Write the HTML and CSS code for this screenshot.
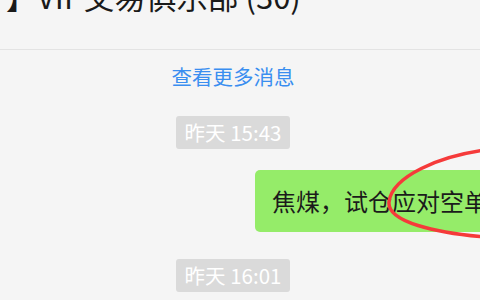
FILE: index.html
```html
<!DOCTYPE html>
<html lang="zh-CN">
<head>
<meta charset="utf-8">
<link rel="stylesheet" href="styles.css">
</head>
<body>
<div class="window">
  <header class="chat-header">
    <div class="chat-title">】VIP交易俱乐部 (30)</div>
  </header>
  <main class="messages">
    <a class="more-link">查看更多消息</a>
    <div class="time-row"><span class="time-tag">昨天 15:43</span></div>
    <div class="msg-row self">
      <div class="bubble">焦煤，试仓应对空单</div>
    </div>
    <div class="time-row second"><span class="time-tag">昨天 16:01</span></div>
  </main>
  <svg class="annotation" width="480" height="300" viewBox="0 0 480 300">
    <path d="M486 150 C440 156 392 176 389 202 C387 222 436 233 486 237" fill="none" stroke="#f53a3a" stroke-width="3.5" stroke-linecap="round"/>
  </svg>
</div>
</body>
</html>
```
FILE: styles.css
```css
html, body {
  margin: 0;
  padding: 0;
  background: #f5f5f5;
  overflow: hidden;
}

.window {
  position: relative;
  width: 480px;
  height: 300px;
  overflow: hidden;
  font-family: "Noto Sans CJK SC", "Noto Sans", sans-serif;
}

.chat-header {
  height: 49px;
  border-bottom: 1px solid #e3e3e3;
  overflow: hidden;
}

.chat-title {
  margin-top: -20px;
  margin-left: 6px;
  font-size: 31px;
  line-height: 31px;
  color: #1a1a1a;
  white-space: nowrap;
}

.messages {
  display: flex;
  flex-direction: column;
  padding-right: 14px;
}

.more-link {
  align-self: center;
  margin-top: 14px;
  font-size: 20.5px;
  line-height: 24px;
  color: #3a8ef0;
  cursor: pointer;
}

.time-row {
  display: flex;
  justify-content: center;
  margin-top: 28px;
}

.time-row.second {
  margin-top: 27px;
}

.time-tag {
  background: #dadada;
  color: #ffffff;
  font-size: 20.5px;
  line-height: 33px;
  padding: 0 9px;
  border-radius: 3px;
}

.msg-row {
  display: flex;
  margin-top: 21px;
}

.bubble {
  margin-left: 255px;
  background: #95ec69;
  color: #1b1b1b;
  font-size: 24px;
  line-height: 34px;
  padding: 14px 17px;
  border-radius: 5px;
  white-space: nowrap;
}

.annotation {
  position: absolute;
  left: 0;
  top: 0;
  pointer-events: none;
}
```
